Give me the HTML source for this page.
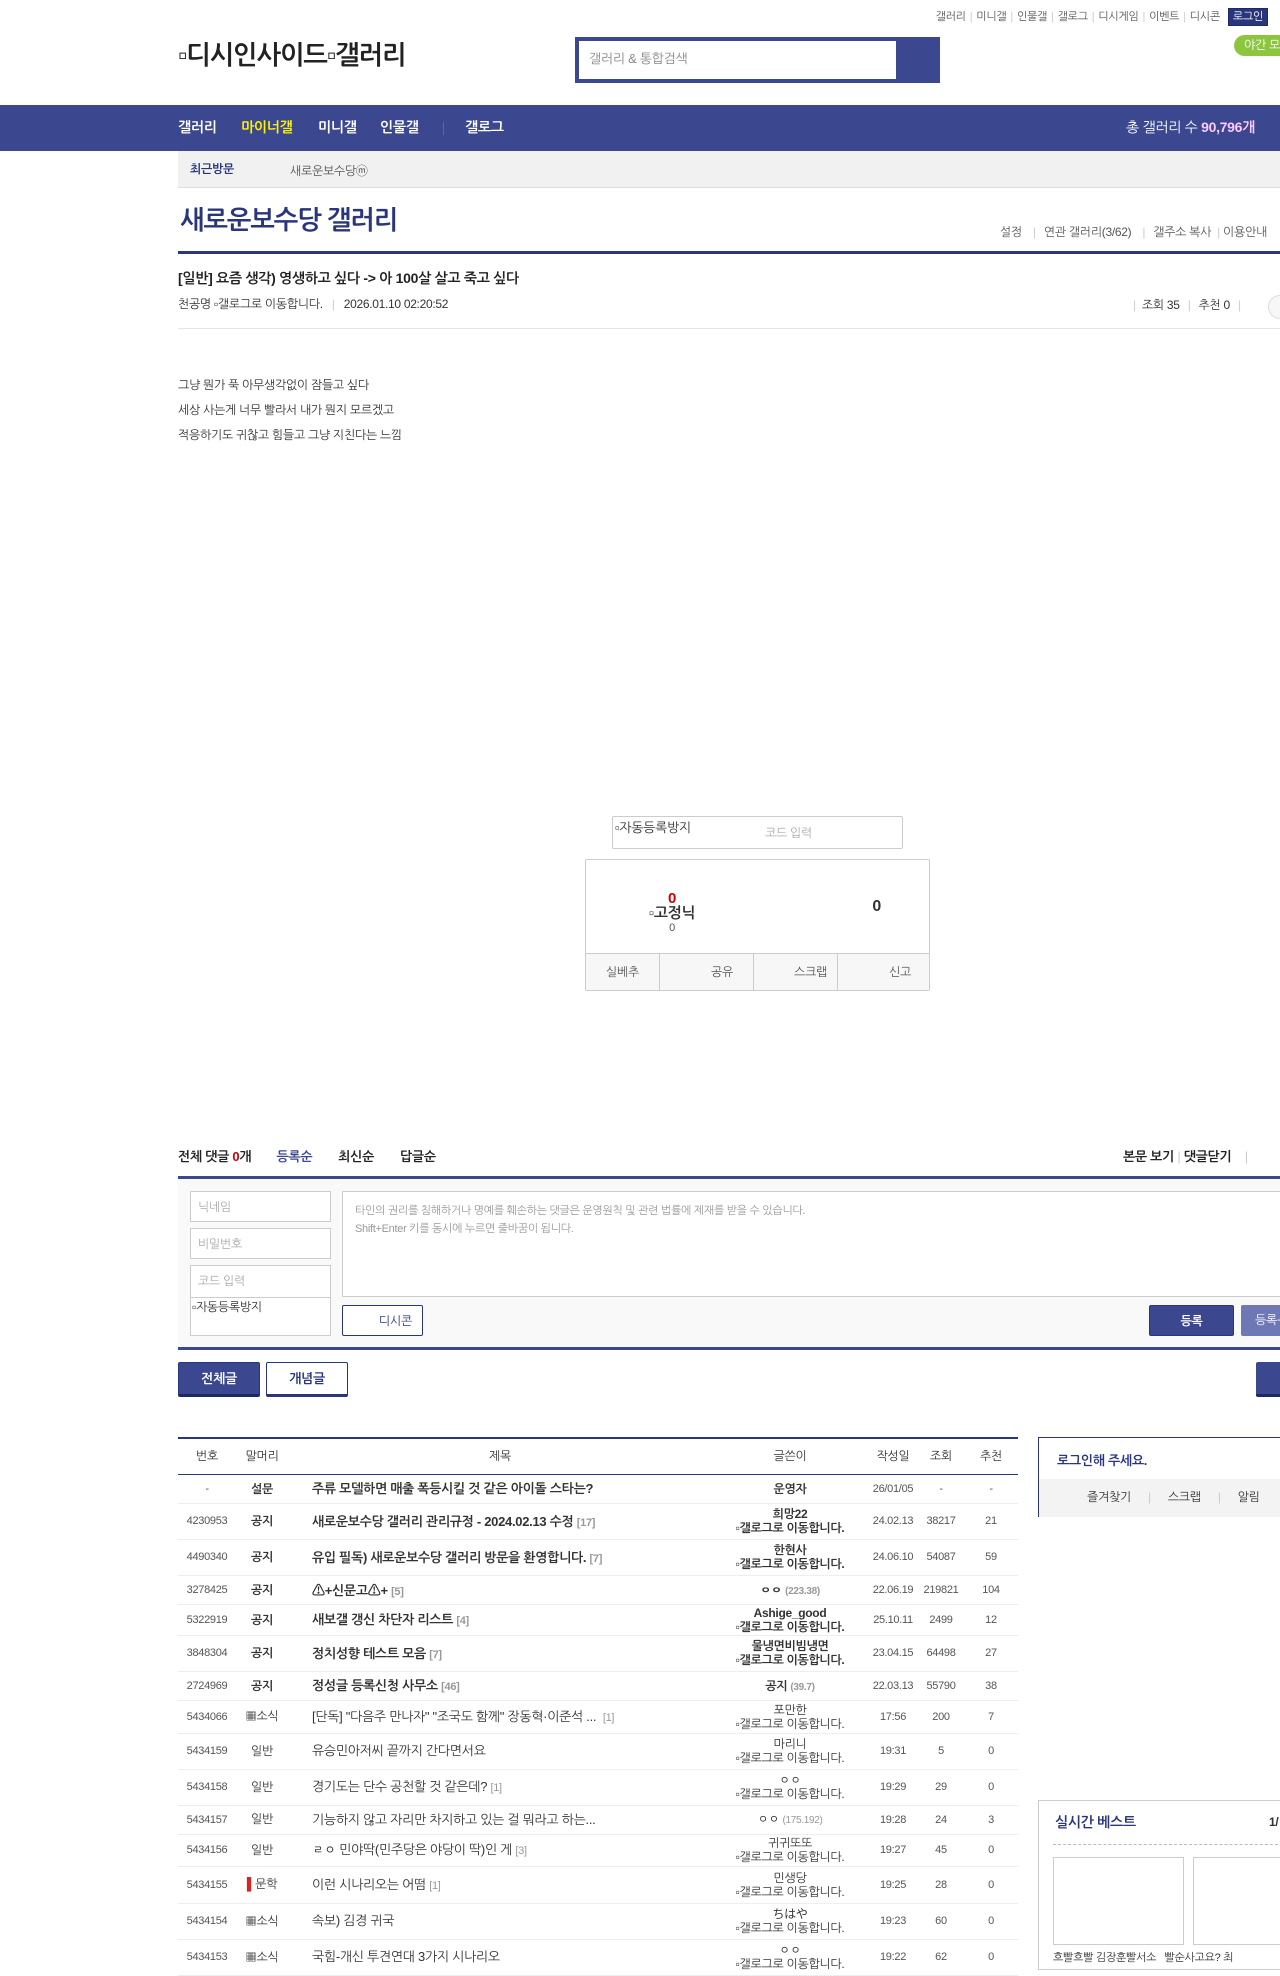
<!DOCTYPE html>
<html><head><meta charset="utf-8">
<style>
*{margin:0;padding:0;box-sizing:border-box}
body{width:1280px;height:1960px;overflow:hidden;position:relative;background:#fff;font-family:"Liberation Sans","NanumGothic","Noto Sans CJK KR",sans-serif;color:#333;font-size:13px;letter-spacing:-0.3px}
.a{position:absolute;white-space:nowrap}
.toplinks{right:12px;top:10px;font-size:11px;color:#555}
.toplinks span.s{color:#ccc;margin:0 4px}
.login{background:#29367c;color:#fff;padding:2px 4px;border:1px solid #1d2866;margin-left:8px}
.nav{left:0;top:105px;width:1280px;height:46px;background:#3b4890}
.nav b{position:absolute;top:14px;color:#fff;font-size:14px}
.recent{left:178px;top:151px;width:1102px;height:37px;background:#f1f1f1;border-bottom:1px solid #ddd}
.line3{height:3px;background:#29367c}
table{border-collapse:collapse;position:absolute;left:178px;top:1437px;width:840px;border-top:2px solid #29367c;font-size:12px;table-layout:fixed}
td{text-align:center;border-bottom:1px solid #eee;color:#333;padding:0;white-space:nowrap;overflow:hidden}
th{height:36px;font-weight:normal;border-bottom:1px solid #29367c;font-size:12px;color:#333}
td.t{text-align:left;padding-left:24px;font-size:13px}
td.n{font-size:11px;color:#555}
.b{font-weight:bold}
.rc{color:#999;font-size:11px}
.w{line-height:14px;font-size:12px}
.g{font-size:12px;color:#333}
.ip{color:#999;font-size:10px}
</style></head><body>

<div class="a toplinks">갤러리<span class="s">|</span>미니갤<span class="s">|</span>인물갤<span class="s">|</span>갤로그<span class="s">|</span>디시게임<span class="s">|</span>이벤트<span class="s">|</span>디시콘<span class="login">로그인</span></div>
<div class="a" style="left:1234px;top:35px;width:60px;height:21px;background:#8cc63f;border-radius:11px;color:#fff;font-size:12px;padding:3px 0 0 10px">야간 모드</div>
<div class="a" style="left:178px;top:40px;font-size:26px;color:#222;font-weight:bold;letter-spacing:-1px">▫디시인사이드▫갤러리</div>
<div class="a" style="left:575px;top:37px;width:365px;height:46px;background:#3b4890"></div>
<div class="a" style="left:579px;top:41px;width:317px;height:38px;background:#fff;color:#888;font-size:13px;padding:10px 10px">갤러리 &amp; 통합검색</div>

<div class="a nav">
<b style="left:178px">갤러리</b><b style="left:241px;color:#fff200">마이너갤</b><b style="left:318px">미니갤</b><b style="left:380px">인물갤</b>
<span style="position:absolute;left:443px;top:17px;width:1px;height:13px;background:#5a66a8"></span>
<b style="left:465px">갤로그</b>
<span style="position:absolute;right:25px;top:14px;color:#fff;font-size:14px">총 갤러리 수 <b style="position:static;color:#ffc8ff">90,796개</b></span>
</div>
<div class="a recent"><span style="position:absolute;left:12px;top:11px;font-size:12px;font-weight:bold;color:#29367c">최근방문</span><span style="position:absolute;left:112px;top:11px;font-size:12px;color:#555">새로운보수당ⓜ</span></div>

<div class="a" style="left:180px;top:205px;font-size:26px;font-weight:bold;color:#29367c;letter-spacing:-1px">새로운보수당 갤러리</div>
<div class="a" style="left:1000px;top:225px;font-size:12px;color:#555">설정 <span style="color:#ccc;margin:0 8px">|</span>연관 갤러리(3/62) <span style="color:#ccc;margin:0 8px">|</span>갤주소 복사 <span style="color:#ccc;margin:0 3px">|</span>이용안내</div>
<div class="a line3" style="left:178px;top:251px;width:1102px"></div>

<div class="a" style="left:178px;top:270px;font-size:14px;font-weight:bold;color:#222">[일반] 요즘 생각) 영생하고 싶다 -&gt; 아 100살 살고 죽고 싶다</div>
<div class="a" style="left:178px;top:297px;font-size:12px;color:#333">천공명 ▫갤로그로 이동합니다. <span style="color:#ccc;margin:0 6px">|</span> 2026.01.10 02:20:52</div>
<div class="a" style="left:1133px;top:298px;font-size:12px;color:#333"><span style="color:#ccc">|</span>&nbsp; 조회 35 <span style="color:#ccc;margin:0 5px">|</span> 추천 0 <span style="color:#ccc;margin-left:5px">|</span></div>
<div class="a" style="left:1268px;top:295px;width:24px;height:24px;border:1px solid #ddd;border-radius:12px;background:#f7f7f7"></div>
<div class="a" style="left:178px;top:328px;width:1102px;height:1px;background:#e5e5e5"></div>

<div class="a" style="left:178px;top:373px;font-size:12px;line-height:25px;color:#333">그냥 뭔가 푹 아무생각없이 잠들고 싶다<br>세상 사는게 너무 빨라서 내가 뭔지 모르겠고<br>적응하기도 귀찮고 힘들고 그냥 지친다는 느낌</div>

<div class="a" style="left:612px;top:816px;width:291px;height:33px;border:1px solid #ccc;border-radius:2px;font-size:13px;color:#333"><span style="position:absolute;left:2px;top:3px">▫자동등록방지</span><span style="position:absolute;left:152px;top:9px;color:#aaa;font-size:12px">코드 입력</span></div>
<div class="a" style="left:585px;top:859px;width:345px;height:132px;border:1px solid #ccc;border-radius:2px">
<div style="position:absolute;left:0;top:0;width:172px;text-align:center"><div style="margin-top:30px;color:#c00;font-weight:bold;font-size:15px">0</div><div style="font-weight:bold;font-size:15px;margin-top:-2px">▫고정닉</div><div style="font-size:11px;color:#555">0</div></div>
<div style="position:absolute;right:48px;top:38px;font-weight:bold;font-size:16px;color:#333">0</div>
<div style="position:absolute;left:0;bottom:0;width:343px;height:37px;background:#f7f7f7;border-top:1px solid #ccc;display:flex;font-size:12px;color:#555">
<div style="flex:1;border-right:1px solid #ccc;text-align:center;padding-top:11px">실베추</div>
<div style="flex:1;border-right:1px solid #ccc;text-align:right;padding:11px 20px 0 0">공유</div>
<div style="flex:1;border-right:1px solid #ccc;text-align:right;padding:11px 10px 0 0">스크랩</div>
<div style="flex:1;text-align:right;padding:11px 18px 0 0">신고</div></div></div>

<div class="a" style="left:178px;top:1149px;font-size:13px;font-weight:bold;color:#222">전체 댓글 <span style="color:#c00">0</span>개 <span style="color:#3b4890;margin-left:22px">등록순</span><span style="margin-left:26px">최신순</span><span style="margin-left:26px">답글순</span></div>
<div class="a" style="left:1123px;top:1149px;font-size:13px;font-weight:bold;color:#222">본문 보기 <span style="color:#ccc;font-weight:normal">|</span> 댓글닫기 <span style="color:#ccc;font-weight:normal;margin-left:10px">|</span></div>
<div class="a line3" style="left:178px;top:1176px;width:1102px;background:#3b4890"></div>
<div class="a" style="left:178px;top:1179px;width:1102px;height:168px;background:#f9f9f9"></div>
<div class="a" style="left:190px;top:1191px;width:141px;height:31px;border:1px solid #ccc;background:#fff;color:#aaa;font-size:12px;padding:8px 7px">닉네임</div>
<div class="a" style="left:190px;top:1228px;width:141px;height:31px;border:1px solid #ccc;background:#fff;color:#aaa;font-size:12px;padding:8px 7px">비밀번호</div>
<div class="a" style="left:190px;top:1265px;width:141px;height:71px;border:1px solid #ccc;background:#fff;color:#aaa;font-size:12px"><div style="height:32px;border-bottom:1px solid #ccc;padding:8px 7px">코드 입력</div><div style="color:#333;padding:2px 1px">▫자동등록방지</div></div>
<div class="a" style="left:342px;top:1191px;width:940px;height:106px;border:1px solid #ccc;background:#fff;color:#999;font-size:11px;line-height:18px;padding:10px 12px">타인의 권리를 침해하거나 명예를 훼손하는 댓글은 운영원칙 및 관련 법률에 제재를 받을 수 있습니다.<br>Shift+Enter 키를 동시에 누르면 줄바꿈이 됩니다.</div>
<div class="a" style="left:342px;top:1305px;width:81px;height:31px;border:1px solid #29367c;border-radius:2px;background:#fff;font-size:12px;color:#29367c;padding:8px 0 0 36px">디시콘</div>
<div class="a" style="left:1149px;top:1305px;width:85px;height:31px;background:#3b4890;border:1px solid #29367c;border-radius:2px;color:#fff;font-size:12px;font-weight:bold;text-align:center;padding-top:8px">등록</div>
<div class="a" style="left:1241px;top:1305px;width:60px;height:31px;background:#6d78b5;border-radius:2px;color:#fff;font-size:12px;padding:8px 0 0 14px">등록+추천</div>
<div class="a line3" style="left:178px;top:1347px;width:1102px;background:#3b4890"></div>

<div class="a" style="left:178px;top:1362px;width:82px;height:35px;background:#3b4890;border:1px solid #29367c;border-bottom:3px solid #1d2866;border-radius:2px;color:#fff;font-weight:bold;font-size:13px;text-align:center;padding-top:8px">전체글</div>
<div class="a" style="left:266px;top:1362px;width:82px;height:35px;background:#fff;border:1px solid #29367c;border-bottom:3px solid #29367c;border-radius:2px;color:#29367c;font-weight:bold;font-size:13px;text-align:center;padding-top:8px">개념글</div>
<div class="a" style="left:1256px;top:1362px;width:60px;height:35px;background:#3b4890;border-bottom:3px solid #1d2866;border-radius:2px"></div>

<table>
<colgroup><col style="width:58px"><col style="width:52px"><col style="width:424px"><col style="width:156px"><col style="width:50px"><col style="width:46px"><col style="width:54px"></colgroup>
<tr><th>번호</th><th>말머리</th><th>제목</th><th>글쓴이</th><th>작성일</th><th>조회</th><th>추천</th></tr>
<tr style="height:29px"><td class="n">-</td><td class="b">설문</td><td class="t b">주류 모델하면 매출 폭등시킬 것 같은 아이돌 스타는?</td><td class="b">운영자</td><td class="n">26/01/05</td><td class="n">-</td><td class="n">-</td></tr>
<tr style="height:36px"><td class="n">4230953</td><td class="b">공지</td><td class="t b">새로운보수당 갤러리 관리규정 - 2024.02.13 수정 <span class="rc">[17]</span></td><td class="w b">희망22<br>▫갤로그로 이동합니다.</td><td class="n">24.02.13</td><td class="n">38217</td><td class="n">21</td></tr>
<tr style="height:36px"><td class="n">4490340</td><td class="b">공지</td><td class="t b">유입 필독) 새로운보수당 갤러리 방문을 환영합니다. <span class="rc">[7]</span></td><td class="w b">한현사<br>▫갤로그로 이동합니다.</td><td class="n">24.06.10</td><td class="n">54087</td><td class="n">59</td></tr>
<tr style="height:29px"><td class="n">3278425</td><td class="b">공지</td><td class="t b">⚠+신문고⚠+ <span class="rc">[5]</span></td><td class="b">ㅇㅇ <span class="ip">(223.38)</span></td><td class="n">22.06.19</td><td class="n">219821</td><td class="n">104</td></tr>
<tr style="height:31px"><td class="n">5322919</td><td class="b">공지</td><td class="t b">새보갤 갱신 차단자 리스트 <span class="rc">[4]</span></td><td class="w b">Ashige_good<br>▫갤로그로 이동합니다.</td><td class="n">25.10.11</td><td class="n">2499</td><td class="n">12</td></tr>
<tr style="height:36px"><td class="n">3848304</td><td class="b">공지</td><td class="t b">정치성향 테스트 모음 <span class="rc">[7]</span></td><td class="w b">물냉면비빔냉면<br>▫갤로그로 이동합니다.</td><td class="n">23.04.15</td><td class="n">64498</td><td class="n">27</td></tr>
<tr style="height:29px"><td class="n">2724969</td><td class="b">공지</td><td class="t b">정성글 등록신청 사무소 <span class="rc">[46]</span></td><td class="b">공지 <span class="ip">(39.7)</span></td><td class="n">22.03.13</td><td class="n">55790</td><td class="n">38</td></tr>
<tr style="height:33px"><td class="n">5434066</td><td class="g">▦소식</td><td class="t">[단독] "다음주 만나자" "조국도 함께" 장동혁·이준석 ... &nbsp;<span class="rc">[1]</span></td><td class="w">포만한<br>▫갤로그로 이동합니다.</td><td class="n">17:56</td><td class="n">200</td><td class="n">7</td></tr>
<tr style="height:36px"><td class="n">5434159</td><td class="g">일반</td><td class="t">유승민아저씨 끝까지 간다면서요</td><td class="w">마리니<br>▫갤로그로 이동합니다.</td><td class="n">19:31</td><td class="n">5</td><td class="n">0</td></tr>
<tr style="height:36px"><td class="n">5434158</td><td class="g">일반</td><td class="t">경기도는 단수 공천할 것 같은데? <span class="rc">[1]</span></td><td class="w">ㅇㅇ<br>▫갤로그로 이동합니다.</td><td class="n">19:29</td><td class="n">29</td><td class="n">0</td></tr>
<tr style="height:29px"><td class="n">5434157</td><td class="g">일반</td><td class="t">기능하지 않고 자리만 차지하고 있는 걸 뭐라고 하는...</td><td>ㅇㅇ <span class="ip">(175.192)</span></td><td class="n">19:28</td><td class="n">24</td><td class="n">3</td></tr>
<tr style="height:32px"><td class="n">5434156</td><td class="g">일반</td><td class="t">ㄹㅇ 민야딱(민주당은 야당이 딱)인 게 <span class="rc">[3]</span></td><td class="w">귀귀또또<br>▫갤로그로 이동합니다.</td><td class="n">19:27</td><td class="n">45</td><td class="n">0</td></tr>
<tr style="height:37px"><td class="n">5434155</td><td class="g"><span style="color:#d22">▌</span>문학</td><td class="t">이런 시나리오는 어떰 <span class="rc">[1]</span></td><td class="w">민생당<br>▫갤로그로 이동합니다.</td><td class="n">19:25</td><td class="n">28</td><td class="n">0</td></tr>
<tr style="height:36px"><td class="n">5434154</td><td class="g">▦소식</td><td class="t">속보) 김경 귀국</td><td class="w">ちはや<br>▫갤로그로 이동합니다.</td><td class="n">19:23</td><td class="n">60</td><td class="n">0</td></tr>
<tr style="height:36px"><td class="n">5434153</td><td class="g">▦소식</td><td class="t">국힘-개신 투견연대 3가지 시나리오</td><td class="w">ㅇㅇ<br>▫갤로그로 이동합니다.</td><td class="n">19:22</td><td class="n">62</td><td class="n">0</td></tr>
</table>

<div class="a" style="left:1038px;top:1437px;width:260px;height:80px;border:1px solid #29367c">
<div style="position:absolute;left:18px;top:15px;font-size:13px;font-weight:bold;color:#29367c">로그인해 주세요.</div>
<div style="position:absolute;left:0;top:41px;width:260px;height:38px;background:#f3f3f3;font-size:12px;color:#333;padding:11px 0 0 48px">즐겨찾기 <span style="color:#ccc;margin:0 14px">|</span> 스크랩 <span style="color:#ccc;margin:0 14px">|</span> 알림</div></div>

<div class="a" style="left:1038px;top:1800px;width:260px;height:170px;border:1px solid #ccc">
<div style="position:absolute;left:16px;top:13px;font-size:14px;font-weight:bold;color:#29367c">실시간 베스트</div>
<div style="position:absolute;left:230px;top:14px;font-size:12px;font-weight:bold">1/</div>
<div style="position:absolute;left:14px;top:43px;width:240px;border-top:1px dashed #bbb"></div>
<div style="position:absolute;left:14px;top:56px;width:131px;height:88px;border:1px solid #ccc"></div>
<div style="position:absolute;left:154px;top:56px;width:131px;height:88px;border:1px solid #ccc"></div>
<div style="position:absolute;left:14px;top:150px;font-size:11px;white-space:nowrap">흐빨흐빨 김장훈빨서소 &nbsp; 빨순사고요? 최</div>
</div>
</body></html>
